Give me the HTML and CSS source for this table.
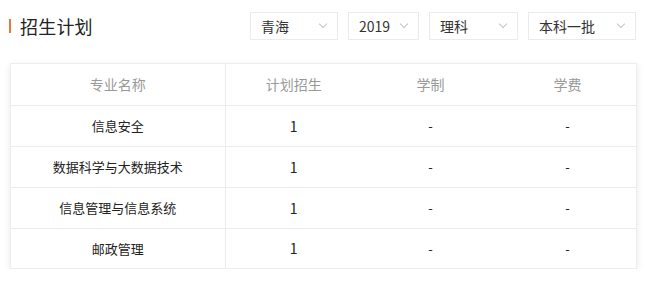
FILE: index.html
```html
<!DOCTYPE html>
<html lang="zh">
<head>
<meta charset="utf-8">
<link rel="stylesheet" href="styles.css">
</head>
<body>
<div class="page">
  <div class="top">
    <h2 class="title">招生计划</h2>
    <div class="filters">
      <div class="sel w88"><span>青海</span><i class="chev"></i></div>
      <div class="sel w71"><span>2019</span><i class="chev"></i></div>
      <div class="sel w89"><span>理科</span><i class="chev"></i></div>
      <div class="sel w108"><span>本科一批</span><i class="chev"></i></div>
    </div>
  </div>
  <div class="card">
    <table class="tbl">
      <thead>
        <tr><th class="c1">专业名称</th><th>计划招生</th><th>学制</th><th>学费</th></tr>
      </thead>
      <tbody>
        <tr><td class="c1">信息安全</td><td class="num">1</td><td>-</td><td>-</td></tr>
        <tr><td class="c1">数据科学与大数据技术</td><td class="num">1</td><td>-</td><td>-</td></tr>
        <tr><td class="c1">信息管理与信息系统</td><td class="num">1</td><td>-</td><td>-</td></tr>
        <tr><td class="c1">邮政管理</td><td class="num">1</td><td>-</td><td>-</td></tr>
      </tbody>
    </table>
  </div>
</div>
</body>
</html>
```
FILE: styles.css
```css
* { box-sizing: border-box; }
html, body { margin: 0; padding: 0; background: #fff; }
body { font-family: "Noto Sans CJK SC", "Noto Sans", sans-serif; color: #333; }
.page { padding: 12px 9px 0 9px; width: 645px; }
.top { display: flex; justify-content: space-between; align-items: center; height: 28px; }
.title {
  margin: 0; font-size: 18px; font-weight: normal; color: #222;
  border-left: 2px solid #e8793b; padding-left: 9px; line-height: 14px; height: 14px;
  display: flex; align-items: center; letter-spacing: 0.2px;
}
.filters { display: flex; gap: 10px; }
.sel {
  height: 28px; border: 1px solid #ebebeb; display: flex; align-items: center;
  justify-content: space-between; padding: 0 11px 0 10px; font-size: 14px; color: #333;
}
.w88 { width: 88px; }
.w71 { width: 71px; }
.w89 { width: 89px; }
.w108 { width: 108px; }
.chev {
  width: 6px; height: 6px; border-right: 1px solid #c4c4c4; border-bottom: 1px solid #c4c4c4;
  transform: rotate(45deg); margin-top: -5px; display: block;
}
.card {
  margin-top: 23px; width: 627px; margin-left: 1px; background: #fff;
  border: 1px solid #eee; box-shadow: 0 2px 7px rgba(0,0,0,0.09);
}
.tbl { width: 100%; border-collapse: collapse; table-layout: fixed; }
.tbl th, .tbl td { text-align: center; height: 41px; border-bottom: 1px solid #ececec; padding: 0; }
.tbl tbody tr:last-child td { border-bottom: none; height: 40px; }
.tbl th { font-weight: normal; font-size: 14px; color: #999; }
.tbl td { font-size: 13px; color: #222; }
.tbl td.num { font-size: 14px; }
.tbl .c1 { width: 214px; border-right: 1px solid #ececec; }
```
